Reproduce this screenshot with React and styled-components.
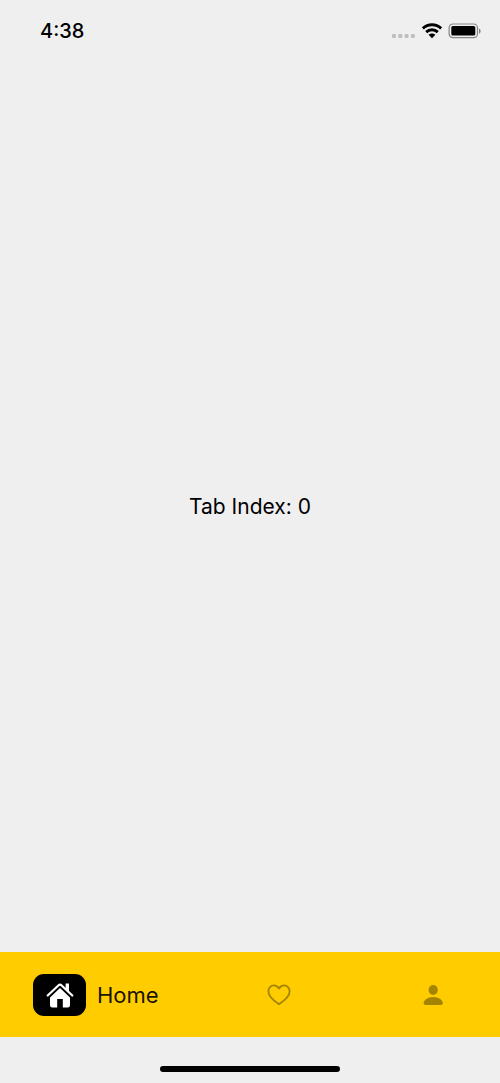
import React, { useState } from "react";
import styled, { createGlobalStyle } from "styled-components";

const GlobalStyle = createGlobalStyle`
  * { box-sizing: border-box; }
  body {
    margin: 0;
    background: #efefef;
    color: #000;
    font-family: Inter, "Liberation Sans", sans-serif;
  }
`;

const Screen = styled.div`
  display: flex;
  flex-direction: column;
  min-height: 100vh;
`;

const StatusBar = styled.header`
  display: flex;
  align-items: center;
  justify-content: space-between;
  height: 60px;
  padding: 2px 18px 0 40px;
`;

const Clock = styled.time`
  font-size: 20px;
  line-height: 24px;
  font-weight: 500;
`;

const StatusIcons = styled.div`
  display: flex;
  align-items: center;
  gap: 6px;

  svg { display: block; }
`;

const Content = styled.main`
  flex: 1;
  display: flex;
  align-items: center;
  justify-content: center;
  padding-top: 2px;
`;

const Message = styled.p`
  margin: 0;
  font-size: 21px;
  line-height: 28px;
`;

const TabBar = styled.nav`
  display: flex;
  align-items: center;
  justify-content: space-between;
  height: 85px;
  padding: 1px 33px 0;
  background: #ffcc00;
`;

const TabButton = styled.button`
  display: flex;
  align-items: center;
  justify-content: ${(p) => (p.$active ? "flex-start" : "center")};
  gap: 11px;
  min-width: ${(p) => (p.$active ? "124px" : "68px")};
  height: 42px;
  padding: 0;
  border: 0;
  background: none;
  color: ${(p) => (p.$active ? "#191400" : "#a38300")};
  font: inherit;
  font-size: 22px;
  line-height: 28px;
  cursor: pointer;
`;

const IconBox = styled.span`
  display: flex;
  align-items: center;
  justify-content: center;
  width: ${(p) => (p.$active ? "53px" : "28px")};
  height: ${(p) => (p.$active ? "42px" : "28px")};
  border-radius: 11px;
  background: ${(p) => (p.$active ? "#000" : "none")};
  color: ${(p) => (p.$active ? "#fff" : "inherit")};
`;

const HomeIndicatorArea = styled.footer`
  display: flex;
  justify-content: center;
  align-items: flex-end;
  height: 46px;
  padding-bottom: 11px;
`;

const HomeIndicator = styled.div`
  width: 36%;
  height: 6px;
  border-radius: 3px;
  background: #000;
`;

const SignalIcon = () => (
  <svg width="24" height="16" viewBox="0 0 24 16" fill="#bfbfbf" aria-hidden="true">
    <rect x="0" y="11" width="4" height="4" rx="1.3" />
    <rect x="6.3" y="11" width="4" height="4" rx="1.3" />
    <rect x="12.6" y="11" width="4" height="4" rx="1.3" />
    <rect x="18.9" y="11" width="4" height="4" rx="1.3" />
  </svg>
);

const WifiIcon = () => (
  <svg width="20" height="16" viewBox="0 0 20 16" aria-hidden="true">
    <g fill="none" stroke="#000" strokeWidth="2.9">
      <path d="M.8 5.4C5.9.5 14.1.5 19.2 5.4" />
      <path d="M4.2 9.1C7.4 6 12.6 6 15.8 9.1" />
    </g>
    <path d="M6.6 11.7c1.9-1.7 4.9-1.7 6.8 0L10 15.2z" />
  </svg>
);

const BatteryIcon = () => (
  <svg width="34" height="16" viewBox="0 0 34 16" aria-hidden="true">
    <rect x="1.1" y="1" width="28.4" height="13.6" rx="3.8" fill="none" stroke="#858585" strokeWidth="1.2" />
    <rect x="3.3" y="3" width="24" height="9.6" rx="1.6" />
    <path d="M31 5.4v5.2c2.2-.8 2.2-4.4 0-5.2z" fill="#858585" />
  </svg>
);

const HomeIcon = () => (
  <svg width="28" height="26" viewBox="0 0 28 26" fill="currentColor" aria-hidden="true">
    <path d="M1.7 13.5L12.6 3.2Q14 1.9 15.4 3.2L26.3 13.5" fill="none" stroke="currentColor" strokeWidth="2.2" strokeLinecap="round" strokeLinejoin="round" />
    <path d="M19.6 1.6h3.4v8.3L19.6 6.8z" />
    <path d="M14 6l10 9.4v7.9q0 2.2-2.2 2.2h-5v-8.6h-5.6v8.6h-5Q4 25.5 4 23.3v-7.9z" />
  </svg>
);

const HeartIcon = () => (
  <svg width="24" height="22" viewBox="0 0 24 22" fill="none" stroke="currentColor" strokeWidth="1.8" strokeLinejoin="round" aria-hidden="true">
    <path d="M12 20.2C8 17.5 1.4 12.8 1.4 7.4c0-3.4 2.4-6.1 5.5-6.1 2.2 0 4 1.2 5.1 3.2 1.1-2 2.9-3.2 5.1-3.2 3.1 0 5.5 2.7 5.5 6.1 0 5.4-6.6 10.1-10.6 12.8z" />
  </svg>
);

const PersonIcon = () => (
  <svg width="20" height="21" viewBox="0 0 20 21" fill="currentColor" aria-hidden="true">
    <ellipse cx="10.2" cy="5" rx="4.6" ry="5" />
    <path d="M2.7 20C1.3 20 .6 19.3.6 18.1c0-2.8 3.8-6.2 9.6-6.2s9.6 3.4 9.6 6.2c0 1.2-.7 1.9-2.1 1.9z" />
  </svg>
);

const tabs = [
  { label: "Home", Icon: HomeIcon },
  { label: "Favorites", Icon: HeartIcon },
  { label: "Profile", Icon: PersonIcon },
];

export default function App() {
  const [index, setIndex] = useState(0);

  return (
    <Screen>
      <GlobalStyle />
      <StatusBar>
        <Clock>4:38</Clock>
        <StatusIcons>
          <SignalIcon />
          <WifiIcon />
          <BatteryIcon />
        </StatusIcons>
      </StatusBar>
      <Content>
        <Message>Tab Index: {index}</Message>
      </Content>
      <TabBar>
        {tabs.map(({ label, Icon }, i) => (
          <TabButton
            key={label}
            type="button"
            aria-label={label}
            aria-current={i === index ? "page" : undefined}
            $active={i === index}
            onClick={() => setIndex(i)}
          >
            <IconBox $active={i === index}>
              <Icon />
            </IconBox>
            {i === index && label}
          </TabButton>
        ))}
      </TabBar>
      <HomeIndicatorArea>
        <HomeIndicator />
      </HomeIndicatorArea>
    </Screen>
  );
}
